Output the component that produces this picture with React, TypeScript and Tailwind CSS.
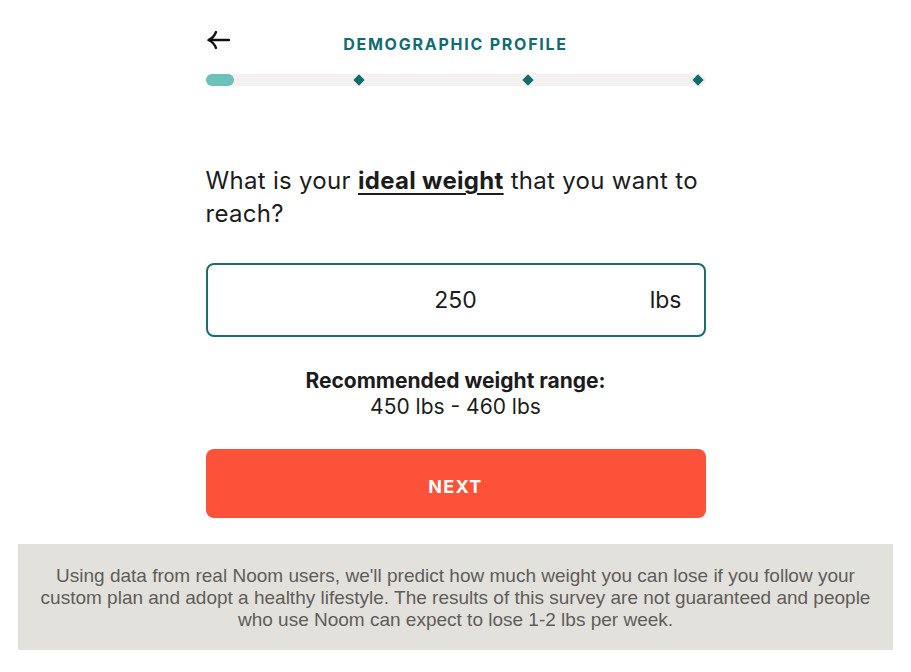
const ff = { fontFamily: "Inter, 'Open Sans', sans-serif" };

function BackArrow() {
  return (
    <svg width="24" height="20" viewBox="0 0 24 20" fill="none">
      <path d="M3 10H23" stroke="#111" strokeWidth="2.4" strokeLinecap="round" />
      <path d="M10 2C8.5 6 6 8.5 2.5 10C6 11.5 8.5 14 10 18" stroke="#111" strokeWidth="2.4" strokeLinecap="round" strokeLinejoin="round" />
    </svg>
  );
}

function Diamond() {
  return <div className="w-[8px] h-[8px] rotate-45 bg-[#116c71]" />;
}

export default function App() {
  return (
    <div className="min-h-[672px] bg-white flex flex-col items-center" style={ff}>
      <div className="w-[500px] pt-[30px]">
        <div className="relative flex items-center justify-center h-[28px]">
          <button className="absolute left-0 top-0" aria-label="Back">
            <BackArrow />
          </button>
          <h1 className="text-[16px] font-bold tracking-[0.11em] text-[#116c71]">
            DEMOGRAPHIC PROFILE
          </h1>
        </div>

        <div className="mt-[16px] h-[12px] rounded-full bg-[#f4f2ee] flex items-center">
          <div className="w-[28px] h-[12px] rounded-full bg-[#6cc2b8]" />
          <div className="flex-1 flex items-center justify-between pl-[121px] pr-[4px]">
            <Diamond />
            <Diamond />
            <Diamond />
          </div>
        </div>

        <p className="mt-[78px] text-[24px] leading-[33px] tracking-[0.3px] text-[#1c1c1c]">
          What is your{" "}
          <span className="font-bold underline underline-offset-[4px] decoration-2">ideal weight</span>{" "}
          that you want to reach?
        </p>

        <div className="mt-[33px] h-[74px] rounded-[8px] border-2 border-[#1a6d70] grid grid-cols-[1fr_auto_1fr] items-center px-[22px]">
          <div />
          <div className="text-[23px] text-[#1c1c1c]">250</div>
          <div className="justify-self-end text-[23px] text-[#1c1c1c]">lbs</div>
        </div>

        <div className="mt-[31px] text-center text-[21px] leading-[26px] text-[#1c1c1c]">
          <div className="font-bold">Recommended weight range:</div>
          <div>450 lbs - 460 lbs</div>
        </div>

        <button className="mt-[29px] w-full h-[69px] pt-[5px] rounded-[8px] bg-[#fc523a] text-white text-[18px] font-bold tracking-[0.07em]">
          NEXT
        </button>
      </div>

      <div className="mt-[26px] w-[875px] bg-[#e3e1dc] px-[22px] pt-[21px] pb-[19px] text-center text-[19px] leading-[22px] text-[#5e5d5a]" style={{ fontFamily: "'Liberation Sans', sans-serif" }}>
        Using data from real Noom users, we'll predict how much weight you can lose if you follow your custom plan and adopt a healthy lifestyle. The results of this survey are not guaranteed and people who use Noom can expect to lose 1-2 lbs per week.
      </div>
    </div>
  );
}
